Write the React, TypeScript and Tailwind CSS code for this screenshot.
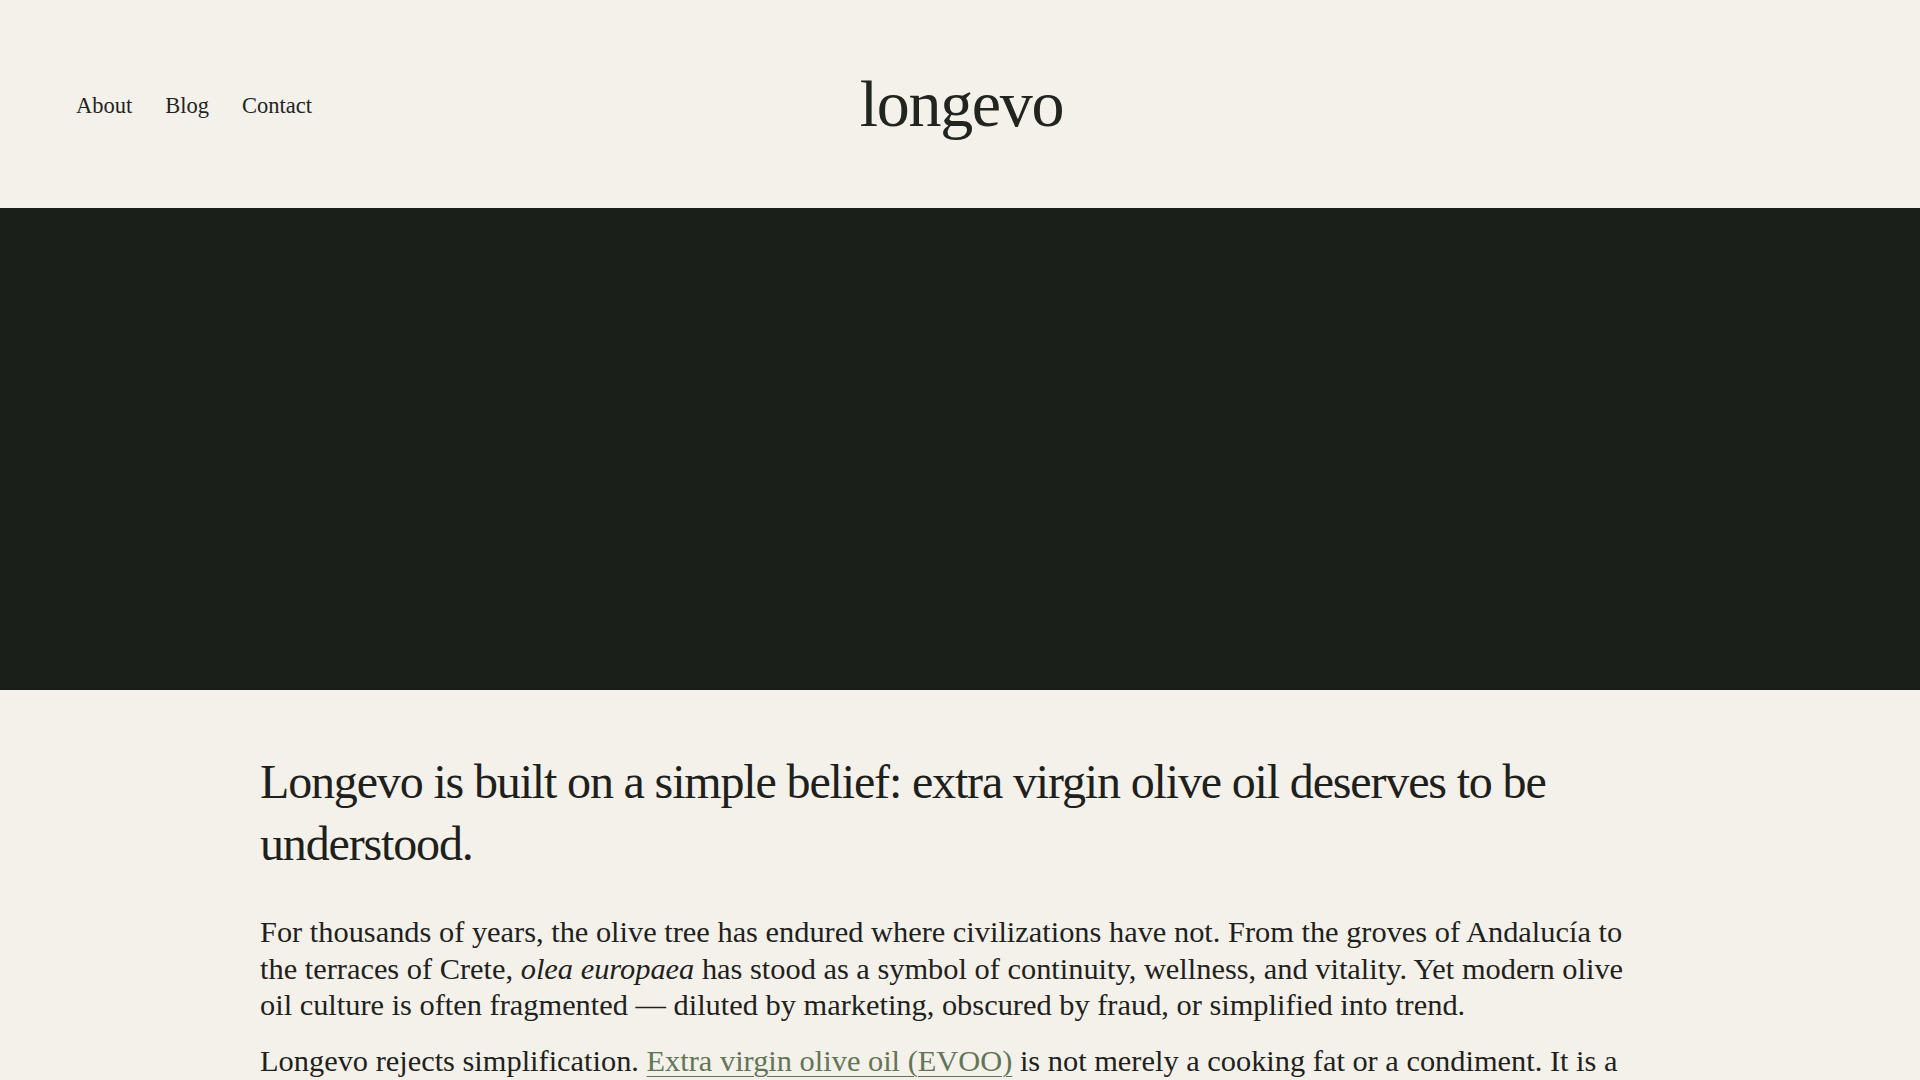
const NAV = ["About", "Blog", "Contact"];

export default function App() {
  return (
    <div className="min-h-screen bg-[#f3f1ea] text-[#1f211c] font-['Liberation_Serif','Times_New_Roman',serif]">
      <header className="grid h-[208px] grid-cols-[1fr_auto_1fr] items-center px-[76px]">
        <nav className="mt-[3px] flex items-center gap-[33px] text-[22.5px] leading-[34px]">
          {NAV.map((item) => (
            <a key={item} href="#" className="text-[#22241f]">
              {item}
            </a>
          ))}
        </nav>
        <a href="#" className="pl-[3px] text-[66px] leading-none tracking-[-0.02em] text-[#22241f]">
          longevo
        </a>
        <div />
      </header>

      <div className="h-[482px] bg-[#1b1f1a]" />

      <main className="mx-auto max-w-[1400px] pt-[61px] pb-24">
        <h1 className="mb-[40px] text-[48px] leading-[61.5px] tracking-[-0.024em] text-[#1e201b]">
          Longevo is built on a simple belief: extra virgin olive oil deserves to be understood.
        </h1>
        <div className="space-y-[19px] text-[30.4px] leading-[36.6px]">
          <p>
            For thousands of years, the olive tree has endured where civilizations have not. From the groves of
            Andalucía to the terraces of Crete, <em>olea europaea</em> has stood as a symbol of continuity, wellness,
            and vitality. Yet modern olive oil culture is often fragmented — diluted by marketing, obscured by fraud, or
            simplified into trend.
          </p>
          <p>
            Longevo rejects simplification.{" "}
            <a href="#" className="text-[#627556] underline decoration-1 underline-offset-[5px]">
              Extra virgin olive oil (EVOO)
            </a>{" "}
            is not merely a cooking fat or a condiment. It is a living food, shaped by soil, climate, cultivar and the
            care of those who press it.
          </p>
        </div>
      </main>
    </div>
  );
}
